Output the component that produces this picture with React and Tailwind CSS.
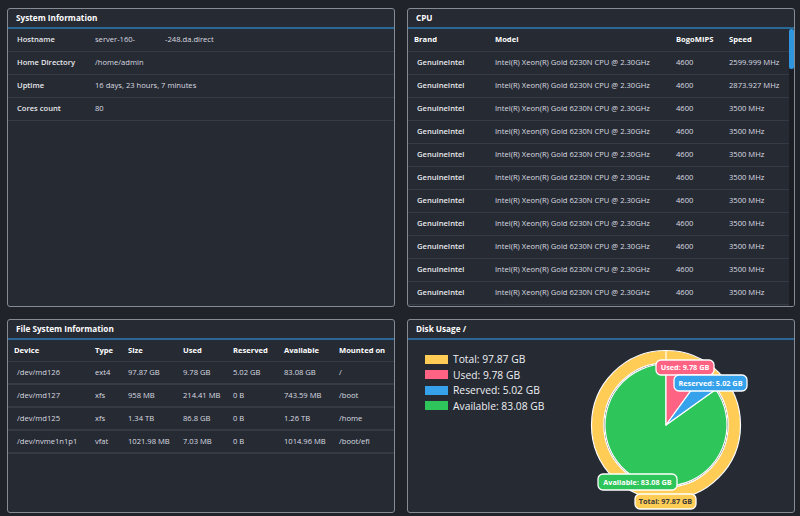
import React from "react";

const FONT = { fontFamily: '"Open Sans", "DejaVu Sans", sans-serif' };

function Card({ title, children, className = "" }) {
  return (
    <div className={"flex flex-col min-h-0 overflow-hidden rounded-[3px] border border-[#868b94] bg-[#262a33] " + className}>
      <div className="h-[20px] shrink-0 flex items-center px-[8px] border-b-2 border-[#2a6797] text-white font-bold text-[8.2px]">
        {title}
      </div>
      {children}
    </div>
  );
}

const speeds = ["2599.999 MHz", "2873.927 MHz"];
const cpuRows = Array.from({ length: 11 }, (_, i) => speeds[i] || "3500 MHz");

const fsRows = [
  ["/dev/md126", "ext4", "97.87 GB", "9.78 GB", "5.02 GB", "83.08 GB", "/"],
  ["/dev/md127", "xfs", "958 MB", "214.41 MB", "0 B", "743.59 MB", "/boot"],
  ["/dev/md125", "xfs", "1.34 TB", "86.8 GB", "0 B", "1.26 TB", "/home"],
  ["/dev/nvme1n1p1", "vfat", "1021.98 MB", "7.03 MB", "0 B", "1014.96 MB", "/boot/efi"],
];

function polar(cx, cy, r, deg) {
  const a = ((deg - 90) * Math.PI) / 180;
  return [cx + r * Math.cos(a), cy + r * Math.sin(a)];
}
function slice(cx, cy, r, a0, a1) {
  const [x0, y0] = polar(cx, cy, r, a0);
  const [x1, y1] = polar(cx, cy, r, a1);
  const large = a1 - a0 > 180 ? 1 : 0;
  return `M${cx},${cy} L${x0},${y0} A${r},${r} 0 ${large} 1 ${x1},${y1} Z`;
}

function Pie() {
  const cx = 100, cy = 85, r = 61;
  const used = (9.78 / 97.87) * 360;
  const res = used + (5.02 / 97.87) * 360;
  const label = (x, y, w, h, fill, text, dark) => (
    <g>
      <rect x={x} y={y} width={w} height={h} rx="5" fill={fill} stroke="#ffffff" strokeWidth="1.3" />
      <text x={x + w / 2} y={y + h / 2 + 2.6} textAnchor="middle" fontSize="7.3" fontWeight="700" fill={dark ? "#3a3a3a" : "#ffffff"} style={FONT}>
        {text}
      </text>
    </g>
  );
  return (
    <svg width="220" height="172" viewBox="0 0 220 172" className="shrink-0">
      <circle cx={cx} cy={cy} r="68.3" fill="none" stroke="#ffcd56" strokeWidth="12" />
      <circle cx={cx} cy={cy} r="74.5" fill="none" stroke="#ffffff" strokeWidth="1.2" />
      <circle cx={cx} cy={cy} r="62.2" fill="none" stroke="#ffffff" strokeWidth="1.2" />
      <line x1={cx} y1={cy - 74.5} x2={cx} y2={cy - 62.2} stroke="#ffffff" strokeWidth="1.2" />
      <path d={slice(cx, cy, r, res, 359.99)} fill="#2ec55a" stroke="#ffffff" strokeWidth="1.2" strokeLinejoin="round" />
      <path d={slice(cx, cy, r, 0, used)} fill="#ff6384" stroke="#ffffff" strokeWidth="1.2" strokeLinejoin="round" />
      <path d={slice(cx, cy, r, used, res)} fill="#36a2eb" stroke="#ffffff" strokeWidth="1.2" strokeLinejoin="round" />
      {label(90, 20, 58, 15, "#ff6384", "Used: 9.78 GB")}
      {label(108, 35, 73, 16, "#36a2eb", "Reserved: 5.02 GB")}
      {label(32, 134, 79, 16, "#2ec55a", "Available: 83.08 GB")}
      {label(69, 154, 61, 15, "#ffcd56", "Total: 97.87 GB", true)}
    </svg>
  );
}

export default function App() {
  return (
    <div style={FONT} className="w-[800px] h-[516px] bg-[#20232a] pt-[8px] pl-[7px] pr-[5px] pb-[3px] grid grid-cols-2 grid-rows-[299px_194px] gap-[12px] text-[#d9dbe0] text-[7.6px] overflow-hidden">
      {/* System Information */}
      <Card title="System Information">
        {[
          ["Hostname", (
            <span>server-160-<span className="inline-block w-[30px]" />-248.da.direct</span>
          )],
          ["Home Directory", "/home/admin"],
          ["Uptime", "16 days, 23 hours, 7 minutes"],
          ["Cores count", "80"],
        ].map(([k, v]) => (
          <div key={k} className="h-[23px] shrink-0 grid grid-cols-[78px_1fr] items-center px-[9px] border-b border-[#363a45]">
            <span className="font-semibold text-[#e6e8ec]">{k}</span>
            <span>{v}</span>
          </div>
        ))}
      </Card>

      {/* CPU */}
      <Card title="CPU">
        <div className="flex flex-1 min-h-0">
          <div className="flex-1 min-w-0">
            <div className="h-[23px] grid grid-cols-[81px_181px_53px_1fr] items-center pl-[6px] border-b border-[#363a45] font-bold text-white">
              <span>Brand</span>
              <span>Model</span>
              <span>BogoMIPS</span>
              <span>Speed</span>
            </div>
            {cpuRows.map((s, i) => (
              <div key={i} className="h-[23px] grid grid-cols-[81px_181px_53px_1fr] items-center pl-[6px] border-b border-[#363a45]">
                <span className="pl-[3px] font-semibold text-[#e6e8ec]">GenuineIntel</span>
                <span>Intel(R) Xeon(R) Gold 6230N CPU @ 2.30GHz</span>
                <span>4600</span>
                <span>{s}</span>
              </div>
            ))}
          </div>
          <div className="w-[5px] shrink-0 bg-[#1b1e24]">
            <div className="h-[40px] w-[5px] rounded-[2px] bg-[#2f95dc]" />
          </div>
        </div>
      </Card>

      {/* File System Information */}
      <Card title="File System Information">
        <div className="h-[22px] shrink-0 grid grid-cols-[81px_33px_55px_50px_51px_55px_1fr] items-center pl-[6px] border-b border-[#363a45] font-bold text-white">
          <span>Device</span>
          <span>Type</span>
          <span>Size</span>
          <span>Used</span>
          <span>Reserved</span>
          <span>Available</span>
          <span>Mounted on</span>
        </div>
        {fsRows.map((r) => (
          <div key={r[0]} className="h-[23px] shrink-0 grid grid-cols-[81px_33px_55px_50px_51px_55px_1fr] items-center pl-[6px] border-b-2 border-[#363a45]">
            <span className="pl-[3px]">{r[0]}</span>
            <span>{r[1]}</span>
            <span>{r[2]}</span>
            <span>{r[3]}</span>
            <span>{r[4]}</span>
            <span>{r[5]}</span>
            <span>{r[6]}</span>
          </div>
        ))}
      </Card>

      {/* Disk Usage */}
      <Card title="Disk Usage /">
        <div className="flex flex-1 min-h-0">
          <div className="w-[158px] shrink-0 pl-[17px] pt-[13px] flex flex-col gap-[3.5px] text-[10.3px] text-[#eef0f3]">
            {[
              ["#ffcd56", "Total: 97.87 GB"],
              ["#ff6384", "Used: 9.78 GB"],
              ["#36a2eb", "Reserved: 5.02 GB"],
              ["#2ec55a", "Available: 83.08 GB"],
            ].map(([c, t]) => (
              <div key={t} className="flex items-center h-[12px] gap-[5px]">
                <span className="w-[23px] h-[9px] shrink-0" style={{ background: c }} />
                <span className="leading-[12px] whitespace-nowrap">{t}</span>
              </div>
            ))}
          </div>
          <Pie />
        </div>
      </Card>
    </div>
  );
}
